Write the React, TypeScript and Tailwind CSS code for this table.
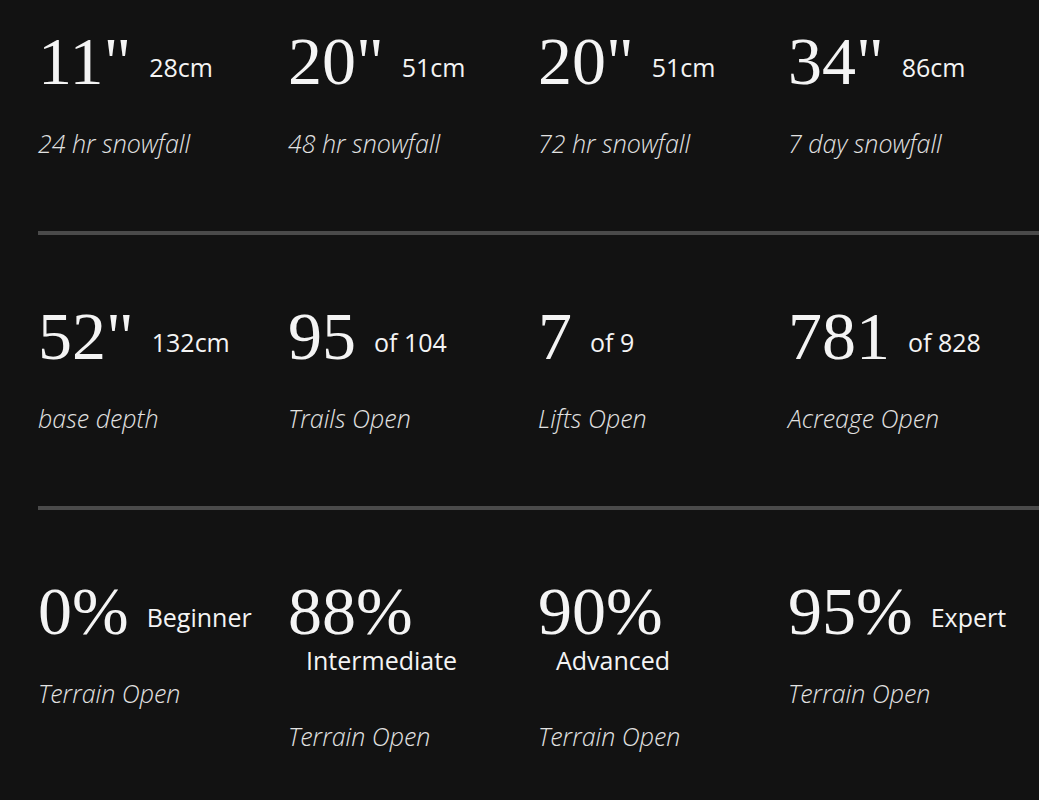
const rows = [
  [
    { value: "11\"", unit: "28cm", label: "24 hr snowfall" },
    { value: "20\"", unit: "51cm", label: "48 hr snowfall" },
    { value: "20\"", unit: "51cm", label: "72 hr snowfall" },
    { value: "34\"", unit: "86cm", label: "7 day snowfall" },
  ],
  [
    { value: "52\"", unit: "132cm", label: "base depth" },
    { value: "95", unit: "of 104", label: "Trails Open" },
    { value: "7", unit: "of 9", label: "Lifts Open" },
    { value: "781", unit: "of 828", label: "Acreage Open" },
  ],
  [
    { value: "0%", unit: "Beginner", label: "Terrain Open" },
    { value: "88%", unit: "Intermediate", label: "Terrain Open" },
    { value: "90%", unit: "Advanced", label: "Terrain Open" },
    { value: "95%", unit: "Expert", label: "Terrain Open" },
  ],
];

function Stat({ value, unit, label }: { value: string; unit: string; label: string }) {
  return (
    <div className="pr-2">
      <p className="text-[25px] leading-[43px] text-[#f4f4f4]">
        <span className="font-['Liberation_Serif',serif] text-[68px] leading-[43px]">{value}</span>
        <span className="ml-[18px] inline-block leading-[24px] align-[7px]">{unit}</span>
      </p>
      <p className="mt-[31px] italic font-light text-[25px] leading-[32px] text-[#e2e2e2]">{label}</p>
    </div>
  );
}

export default function App() {
  return (
    <div className="min-h-[800px] bg-[#121212] pl-[38px] font-['Open_Sans',sans-serif]">
      {rows.map((row, i) => (
        <div key={i}>
          {i > 0 && <div className="h-[4px] bg-[#4a4a4a]" />}
          <div
            className={`grid grid-cols-[250px_250px_250px_250px] pb-[72px] ${
              i === 0 ? "pt-[40px]" : "pt-[80px]"
            }`}
          >
            {row.map((s, j) => (
              <Stat key={j} {...s} />
            ))}
          </div>
        </div>
      ))}
    </div>
  );
}
